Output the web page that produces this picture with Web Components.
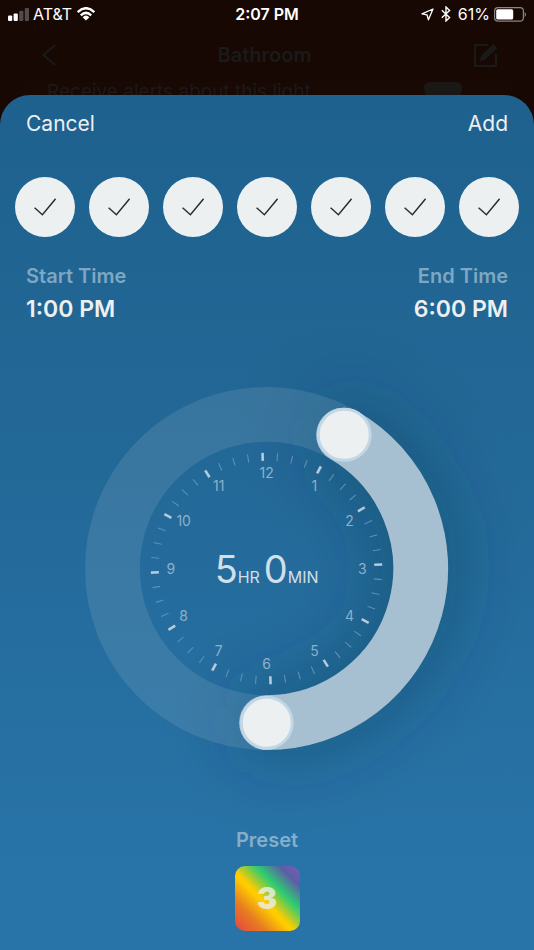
<!DOCTYPE html>
<html lang="en">
<head>
<meta charset="utf-8">
<meta name="viewport" content="width=device-width, initial-scale=1">
<title>Schedule</title>
<style>
  html, body { margin: 0; min-height: 100%; }
  body { background: #170804; font-family: Inter, "Liberation Sans", sans-serif; color: #ecf0f1; }
</style>
</head>
<body>
<schedule-screen></schedule-screen>
<script>
const define = (name, html, setup) => {
  const template = document.createElement('template');
  template.innerHTML = '<style>*{box-sizing:border-box}</style>' + html;
  customElements.define(name, class extends HTMLElement {
    constructor() {
      super();
      this.attachShadow({ mode: 'open' }).append(template.content.cloneNode(true));
    }
    connectedCallback() { if (setup) setup(this, this.shadowRoot); }
  });
};

define('status-bar', `
  <style>
    :host { display: grid; grid-template-columns: 1fr auto 1fr; align-items: center; height: 28px; padding: 0 8px; color: #fff; font-size: 16px; line-height: 20px; }
    div { display: flex; align-items: center; }
    .left { gap: 4px; }
    .right { gap: 7px; justify-content: flex-end; }
    .battery { gap: 4px; }
    b { font-weight: 600; }
    svg { display: block; flex: none; }
  </style>
  <div class="left">
    <svg width="21" height="13" viewBox="0 0 21 13" fill="#fff" aria-label="Signal">
      <rect y="7.6" width="4.2" height="5.4" rx="1"/><rect x="5.6" y="5.4" width="4.2" height="7.6" rx="1"/>
      <rect x="11.2" y="2.8" width="4.2" height="10.2" rx="1" opacity=".27"/><rect x="16.8" width="4.2" height="13" rx="1" opacity=".27"/>
    </svg>
    <span>AT&amp;T</span>
    <svg width="20" height="14" viewBox="0 0 20 14" fill="none" stroke="#fff" stroke-width="2.5" aria-label="Wi-Fi">
      <path d="M1.7 5.1Q10-2.6 18.3 5.1M4.8 8.3Q10 3.5 15.2 8.3"/>
      <path d="M6.6 10.2Q10 7 13.4 10.2L10 13.6Z" fill="#fff" stroke="none"/>
    </svg>
  </div>
  <b>2:07 PM</b>
  <div class="right">
    <svg width="13" height="13" viewBox="0 0 13 13" fill="none" stroke="#fff" stroke-width="1.3" stroke-linejoin="round" aria-label="Location"><path d="M12 1 1 5.8 6 6.8 7.4 11.8Z"/></svg>
    <svg width="10" height="16" viewBox="0 0 10 16" fill="none" stroke="#fff" stroke-width="1.4" aria-label="Bluetooth"><path d="M.8 4.2 8.6 11.6 5 15V1L8.6 4.4.8 11.8"/></svg>
    <div class="battery">
      <span>61%</span>
      <svg width="32" height="15" viewBox="0 0 32 15" aria-label="Battery">
        <rect x=".6" y=".6" width="28.8" height="13.6" rx="3.4" fill="none" stroke="#fff" stroke-width="1.2" opacity=".5"/>
        <rect x="2.2" y="2.2" width="17" height="10.4" rx="1.6" fill="#fff"/>
        <path d="M30.6 5v5q1.4-.6 1.4-2.5T30.6 5" fill="#fff" opacity=".5"/>
      </svg>
    </div>
  </div>`);

define('dimmed-page', `
  <style>
    :host { display: block; color: #1a1a19; }
    header { display: flex; align-items: center; justify-content: space-between; height: 54px; padding: 0 35px 0 42px; }
    button { border: 0; padding: 0; background: none; color: inherit; display: block; }
    h1 { margin: 0; font-size: 20px; line-height: 24px; font-weight: 600; }
    svg { display: block; }
    .row { display: flex; justify-content: space-between; height: 37px; margin: 0 21px; padding: 0 51px 0 26px; font-size: 19px; line-height: 20px; background: #180905; }
    i { width: 38px; height: 22px; border-radius: 6px 6px 19px 19px; background: #191817; }
  </style>
  <header>
    <button aria-label="Back"><svg width="14" height="22" viewBox="0 0 14 22" fill="none" stroke="currentColor" stroke-width="2"><path d="M13 1 1.5 11 13 21"/></svg></button>
    <h1>Bathroom</h1>
    <button aria-label="Edit"><svg width="26" height="26" viewBox="0 0 26 26" fill="none" stroke="currentColor" stroke-width="2"><path d="M15 3H2V24H23V12"/><path d="M8 18 9.5 13.5 20.5 3.5 23 6 12 16.5Z" fill="currentColor"/></svg></button>
  </header>
  <div class="row"><span>Receive alerts about this light</span><i></i></div>`);

define('day-toggle', `
  <style>
    :host { display: block; width: 60px; }
    label { display: grid; place-items: center; }
    input, svg { grid-area: 1 / 1; }
    input { appearance: none; margin: 0; width: 100%; aspect-ratio: 1; border-radius: 50%; background: #ecf0f140; cursor: pointer; }
    input:checked { background: #ecf0f1; }
    svg { pointer-events: none; visibility: hidden; }
    input:checked + svg { visibility: visible; }
  </style>
  <label><input type="checkbox" checked>
    <svg width="22" height="18" viewBox="0 0 22 18" fill="none" stroke="#2b2b2b" stroke-width="1.4"><path d="M.6 9.8 8.4 16.8 21.6.8"/></svg>
  </label>`, (host, root) => root.querySelector('input').setAttribute('aria-label', host.getAttribute('day')));

define('time-field', `
  <style>
    :host { display: block; }
    .name { font-size: 20px; line-height: 26px; font-weight: 600; color: #7ea7c3; }
    .value { font-size: 23px; line-height: 28px; margin-top: 6px; font-weight: 600; }
  </style>
  <div class="name"><slot name="label"></slot></div>
  <div class="value"><slot></slot></div>`);

define('time-dial', `
  <style>
    :host { display: block; position: relative; width: 68%; max-width: 480px; aspect-ratio: 1; container-type: inline-size; }
    svg { display: block; width: 100%; height: 100%; overflow: visible; }
    text { fill: #8db1c9; font-size: 14px; text-anchor: middle; }
    .total { fill: #d0dfe8; font-size: 16px; }
    .big { font-size: 38px; }
    input { appearance: none; position: absolute; margin: 0; width: 15%; height: 15%; transform: translate(-50%, -50%);
      left: calc(50% + 42.5% * sin(var(--angle))); top: calc(50% - 42.5% * cos(var(--angle))); background: none; }
    input::-webkit-slider-thumb { appearance: none; width: 15cqw; height: 15cqw; border-radius: 50%; border: 3px solid #c2d7e5; background: #ecf0f1; }
    input::-webkit-slider-runnable-track { height: 100%; }
  </style>
  <svg viewBox="-182 -182 364 364">
    <defs><filter id="soft" filterUnits="userSpaceOnUse" x="-300" y="-350" width="700" height="750"><feGaussianBlur stdDeviation="38"/></filter></defs>
    <path class="arc" fill="none" stroke="#123048" stroke-opacity=".45" stroke-width="56" stroke-linecap="round" filter="url(#soft)"/>
    <circle r="154.5" fill="none" stroke="#ecf0f1" stroke-opacity=".11" stroke-width="55"/>
    <path class="arc" fill="none" stroke="#a6bfd1" stroke-width="55" stroke-linecap="round"/>
    <g class="ticks"></g>
    <text class="total" y="14"><tspan class="big">5</tspan><tspan>HR</tspan><tspan class="big" dx="4">0</tspan><tspan>MIN</tspan></text>
  </svg>
  <input type="range" min="0" max="12" value="1" aria-label="Start time" style="--angle:30deg">
  <input type="range" min="0" max="12" value="6" aria-label="End time" style="--angle:180deg">`,
  (host, root) => {
    const point = (deg, r) => [r * Math.sin(deg * Math.PI / 180), -r * Math.cos(deg * Math.PI / 180)];
    const r = 154.5;
    const d = `M${point(30, r)}A${r} ${r} 0 0 1 ${point(180, r)}`;
    root.querySelectorAll('.arc').forEach(p => p.setAttribute('d', d));
    let marks = '';
    for (let i = 0; i < 48; i++) {
      const major = i % 4 === 0;
      marks += `<path d="M0-116V-108" transform="rotate(${i * 7.5 - 2})" stroke="${major ? '#b4cbdb' : '#5f91b3'}" stroke-width="${major ? 2.6 : 1.1}"/>`;
    }
    for (let h = 1; h <= 12; h++) {
      const [x, y] = point(h * 30, 96);
      marks += `<text x="${x}" y="${y + 5}">${h}</text>`;
    }
    root.querySelector('.ticks').innerHTML = marks;
  });

define('preset-picker', `
  <style>
    :host { display: flex; flex-direction: column; align-items: center; gap: 13px; }
    h2 { margin: 0; font-size: 20px; line-height: 26px; font-weight: 600; color: #85aecb; }
    button { width: 65px; height: 65px; border: 0; border-radius: 10px; padding: 0 0 2px; color: #ecf0f1cc; font: 900 30px/32px Inter, sans-serif;
      background: linear-gradient(45deg, #e74c3c 4%, #e67e22 24%, #ffcc00 43%, #ffcc00 46%, #2ecc71 66%, #5a5fa5 84%, #7f5ab8 100%); }
  </style>
  <h2>Preset</h2>
  <button>3</button>`);

define('schedule-sheet', `
  <style>
    :host { display: flex; flex-direction: column; position: relative; border-radius: 30px 30px 0 0; padding-bottom: 20px;
      background: linear-gradient(#1e618f, #226795 35%, #2874a9 94%); }
    header, .times { display: flex; justify-content: space-between; padding: 0 26px; }
    header { padding-top: 15px; }
    header button { border: 0; padding: 0; background: none; color: inherit; font: 400 21px/28px Inter, sans-serif; }
    fieldset { display: flex; justify-content: space-between; border: 0; margin: 39px 0 0; padding: 0 15px; min-width: 0; }
    .times { margin-top: 26px; }
    .end { text-align: right; }
    time-dial { margin: 64px auto 0; }
    preset-picker { margin-top: 77px; }
  </style>
  <header><button>Cancel</button><button>Add</button></header>
  <fieldset aria-label="Repeat">
    <day-toggle day="Sunday"></day-toggle><day-toggle day="Monday"></day-toggle><day-toggle day="Tuesday"></day-toggle><day-toggle day="Wednesday"></day-toggle><day-toggle day="Thursday"></day-toggle><day-toggle day="Friday"></day-toggle><day-toggle day="Saturday"></day-toggle>
  </fieldset>
  <div class="times">
    <time-field><span slot="label">Start Time</span>1:00 PM</time-field>
    <time-field class="end"><span slot="label">End Time</span>6:00 PM</time-field>
  </div>
  <time-dial></time-dial>
  <preset-picker></preset-picker>`);

define('schedule-screen', `
  <style>
    :host { display: flex; flex-direction: column; min-height: 100vh; }
    schedule-sheet { flex: 1; margin-top: -24px; }
  </style>
  <status-bar></status-bar>
  <dimmed-page></dimmed-page>
  <schedule-sheet></schedule-sheet>`);
</script>
</body>
</html>
